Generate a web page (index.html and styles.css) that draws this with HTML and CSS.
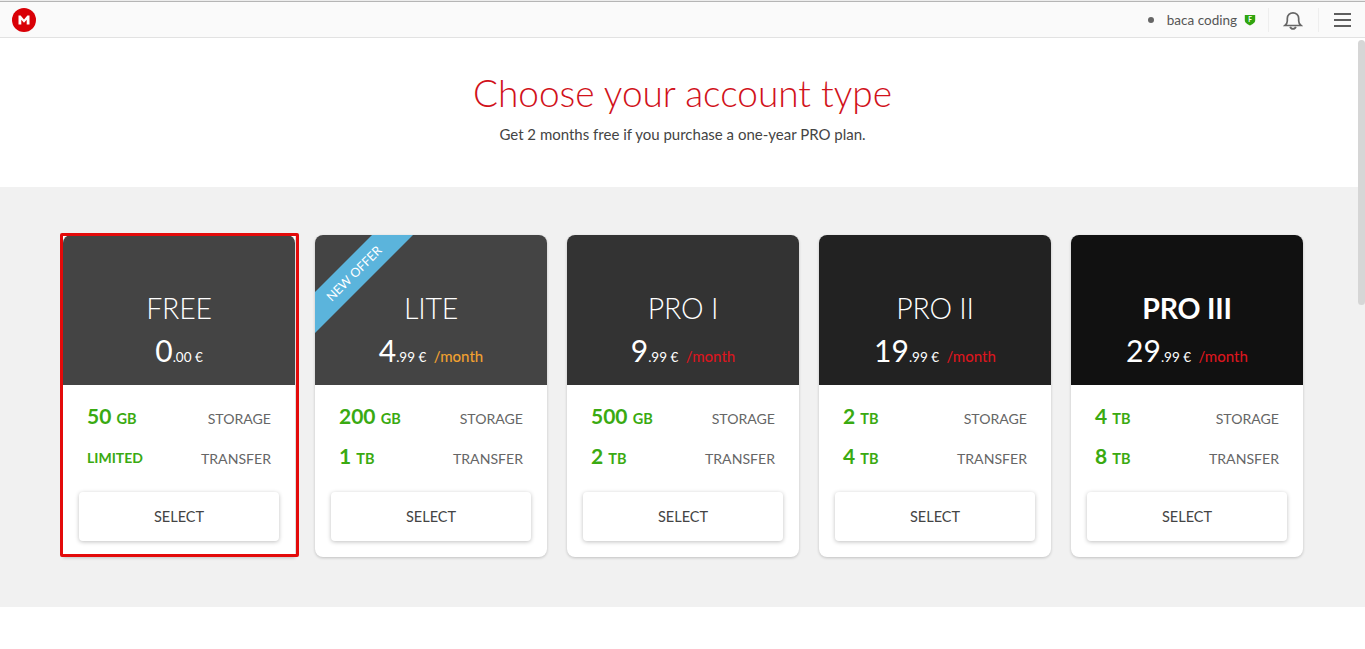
FILE: index.html
```html
<!DOCTYPE html>
<html lang="en">
<head>
    <meta charset="UTF-8">
    <title>Choose your account type</title>
    <link rel="stylesheet" href="styles.css">
</head>
<body>
    <div class="topbar">
        <svg class="logo" viewBox="0 0 24 24" width="24" height="24">
            <circle cx="12" cy="12" r="12" fill="#d90007"/>
            <path d="M6.500 16.500V7.500h2.100l3.400 3.900 3.400-3.900h2.100v9h-2.800v-4.700l-2.700 3h-.000l-2.700-3v4.700z" fill="#fff"/>
        </svg>
        <div class="topbar-right">
            <span class="status-dot"></span>
            <span class="user-name">baca coding</span>
            <svg class="badge" viewBox="0 0 12 12" width="12" height="12">
                <path d="M.8 1h10.400v5.200c0 2.500-2.700 4-5.200 5.300-2.500-1.300-5.200-2.800-5.200-5.300z" fill="#31a50f"/>
                <text x="6" y="7.800" class="badge-text">F</text>
            </svg>
            <span class="divider"></span>
            <svg class="bell" viewBox="0 0 20 20" width="20" height="20" fill="none" stroke="#666" stroke-width="1.700">
                <path d="M2 15.500c1.500-1.300 2.300-2.500 2.300-4.500V8.500a5.700 5.700 0 0 1 11.400 0V11c0 2 .8 3.200 2.300 4.500z"/>
                <path d="M7.200 16.800a2.900 2.900 0 0 0 5.600 0" stroke-width="1.800"/>
            </svg>
            <span class="divider divider-2"></span>
            <div class="menu-icon"><span></span><span></span><span></span></div>
        </div>
    </div>
    <div class="intro">
        <h1>Choose your account type</h1>
        <p>Get 2 months free if you purchase a one-year PRO plan.</p>
    </div>
    <div class="plans">
        <div class="plan selected">
            <div class="plan-head shade-1">
                <div class="plan-name">FREE</div>
                <div class="plan-price"><span class="big">0</span>.00 €</div>
            </div>
            <div class="plan-body">
                <div class="row"><span class="amount">50 <small>GB</small></span><span class="label">STORAGE</span></div>
                <div class="row"><span class="amount limited">LIMITED</span><span class="label">TRANSFER</span></div>
                <div class="select-btn">SELECT</div>
            </div>
        </div>
        <div class="plan">
            <div class="plan-head shade-1">
                <div class="ribbon">NEW OFFER</div>
                <div class="plan-name">LITE</div>
                <div class="plan-price"><span class="big">4</span>.99 € <span class="period orange">/month</span></div>
            </div>
            <div class="plan-body">
                <div class="row"><span class="amount">200 <small>GB</small></span><span class="label">STORAGE</span></div>
                <div class="row"><span class="amount">1 <small>TB</small></span><span class="label">TRANSFER</span></div>
                <div class="select-btn">SELECT</div>
            </div>
        </div>
        <div class="plan">
            <div class="plan-head shade-2">
                <div class="plan-name">PRO I</div>
                <div class="plan-price"><span class="big">9</span>.99 € <span class="period">/month</span></div>
            </div>
            <div class="plan-body">
                <div class="row"><span class="amount">500 <small>GB</small></span><span class="label">STORAGE</span></div>
                <div class="row"><span class="amount">2 <small>TB</small></span><span class="label">TRANSFER</span></div>
                <div class="select-btn">SELECT</div>
            </div>
        </div>
        <div class="plan">
            <div class="plan-head shade-3">
                <div class="plan-name">PRO II</div>
                <div class="plan-price"><span class="big">19</span>.99 € <span class="period">/month</span></div>
            </div>
            <div class="plan-body">
                <div class="row"><span class="amount">2 <small>TB</small></span><span class="label">STORAGE</span></div>
                <div class="row"><span class="amount">4 <small>TB</small></span><span class="label">TRANSFER</span></div>
                <div class="select-btn">SELECT</div>
            </div>
        </div>
        <div class="plan">
            <div class="plan-head shade-4">
                <div class="plan-name bold">PRO III</div>
                <div class="plan-price"><span class="big">29</span>.99 € <span class="period">/month</span></div>
            </div>
            <div class="plan-body">
                <div class="row"><span class="amount">4 <small>TB</small></span><span class="label">STORAGE</span></div>
                <div class="row"><span class="amount">8 <small>TB</small></span><span class="label">TRANSFER</span></div>
                <div class="select-btn">SELECT</div>
            </div>
        </div>
    </div>
    <div class="scroll-thumb"></div>
</body>
</html>
```

FILE: styles.css
```css
html, body {
    height: 100%;
}
body {
    margin: 0;
    overflow: hidden;
    font-family: 'Lato', 'Open Sans', sans-serif;
    background-color: #fff;
    color: #444;
    border-top: 1px solid #ececec;
    box-sizing: border-box;
}
.topbar {
    height: 35px;
    display: flex;
    align-items: center;
    justify-content: space-between;
    padding-left: 12px;
    background-color: #fafafa;
    border-top: 1px solid #b5b5b5;
    border-bottom: 1px solid #e2e2e2;
}
.logo {
    display: block;
}
.topbar-right {
    display: flex;
    align-items: center;
    height: 100%;
}
.status-dot {
    width: 6px;
    height: 6px;
    border-radius: 50%;
    background-color: #666;
    margin-right: 13px;
}
.user-name {
    font-size: 13.500px;
    color: #555;
    margin-right: 7px;
}
.badge {
    display: block;
    margin-right: 12px;
}
.badge-text {
    font-size: 6.500px;
    font-weight: 700;
    fill: #fff;
    text-anchor: middle;
}
.divider {
    width: 1px;
    height: 24px;
    background-color: #eee;
    margin-right: 14px;
}
.divider-2 {
    margin-left: 15px;
    margin-right: 15px;
}
.bell {
    display: block;
}
.menu-icon {
    width: 17px;
    display: flex;
    flex-direction: column;
    gap: 4px;
    margin-right: 14px;
}
.menu-icon span {
    height: 2px;
    background-color: #5e5e5e;
}
.intro {
    height: 149px;
    text-align: center;
    overflow: hidden;
}
.intro h1 {
    margin: 33px 0 0;
    font-size: 37px;
    line-height: 44px;
    font-weight: 300;
    color: #d1121b;
}
.intro p {
    margin: 9px 0 0;
    font-size: 15px;
    line-height: 20px;
    color: #444;
}
.plans {
    height: 420px;
    box-sizing: border-box;
    padding: 48px 0 0 63px;
    display: flex;
    align-items: flex-start;
    gap: 20px;
    background-color: #f1f1f1;
}
.plan {
    position: relative;
    width: 232px;
    height: 322px;
    border-radius: 8px;
    background-color: #fff;
    box-shadow: 0 1px 3px rgba(0, 0, 0, 0.2);
}
.plan.selected {
    border-radius: 0;
}
.plan.selected::after {
    content: "";
    position: absolute;
    top: -2px;
    left: -3px;
    right: -4px;
    bottom: 0;
    border: 3px solid #e30a0a;
    border-radius: 2px;
}
.plan-head {
    position: relative;
    height: 150px;
    box-sizing: border-box;
    padding-top: 55px;
    overflow: hidden;
    border-radius: 8px 8px 0 0;
    color: #fff;
    text-align: center;
}
.shade-1 { background-color: #444; }
.shade-2 { background-color: #333; }
.shade-3 { background-color: #222; }
.shade-4 { background-color: #111; }
.plan-name {
    font-size: 28.500px;
    line-height: 36px;
    font-weight: 300;
    letter-spacing: -0.2px;
}
.plan-name.bold {
    font-weight: 700;
}
.plan-price {
    margin-top: 7px;
    font-size: 13.500px;
    line-height: 34px;
}
.big {
    font-size: 30px;
}
.period {
    margin-left: 4px;
    font-size: 15px;
    font-weight: 500;
    color: #d9161e;
}
.period.orange {
    color: #f0a030;
}
.ribbon {
    position: absolute;
    top: 24px;
    left: -36px;
    width: 150px;
    height: 29px;
    line-height: 29px;
    transform: rotate(-45deg);
    font-size: 12.500px;
    background-color: #5bb4dc;
    color: #fff;
}
.plan-body {
    padding: 12px 16px 0;
}
.row {
    display: flex;
    align-items: center;
    justify-content: space-between;
    height: 40px;
    padding: 0 8px;
}
.amount {
    font-size: 21px;
    font-weight: 700;
    color: #3aaa11;
    padding-bottom: 3px;
}
.amount small {
    font-size: 14.500px;
}
.amount.limited {
    font-size: 14px;
    padding: 1px 0 0;
}
.label {
    font-size: 14.100px;
    color: #666;
    padding-top: 2px;
}
.select-btn {
    margin-top: 15px;
    height: 49px;
    line-height: 49px;
    text-align: center;
    font-size: 14.500px;
    color: #444;
    background-color: #fff;
    border-radius: 4px;
    box-shadow: 0 1px 4px rgba(0, 0, 0, 0.25);
}
.scroll-thumb {
    position: absolute;
    top: 40px;
    right: 0;
    width: 7px;
    height: 265px;
    border-radius: 4px;
    background-color: #d6d6d6;
}
```
